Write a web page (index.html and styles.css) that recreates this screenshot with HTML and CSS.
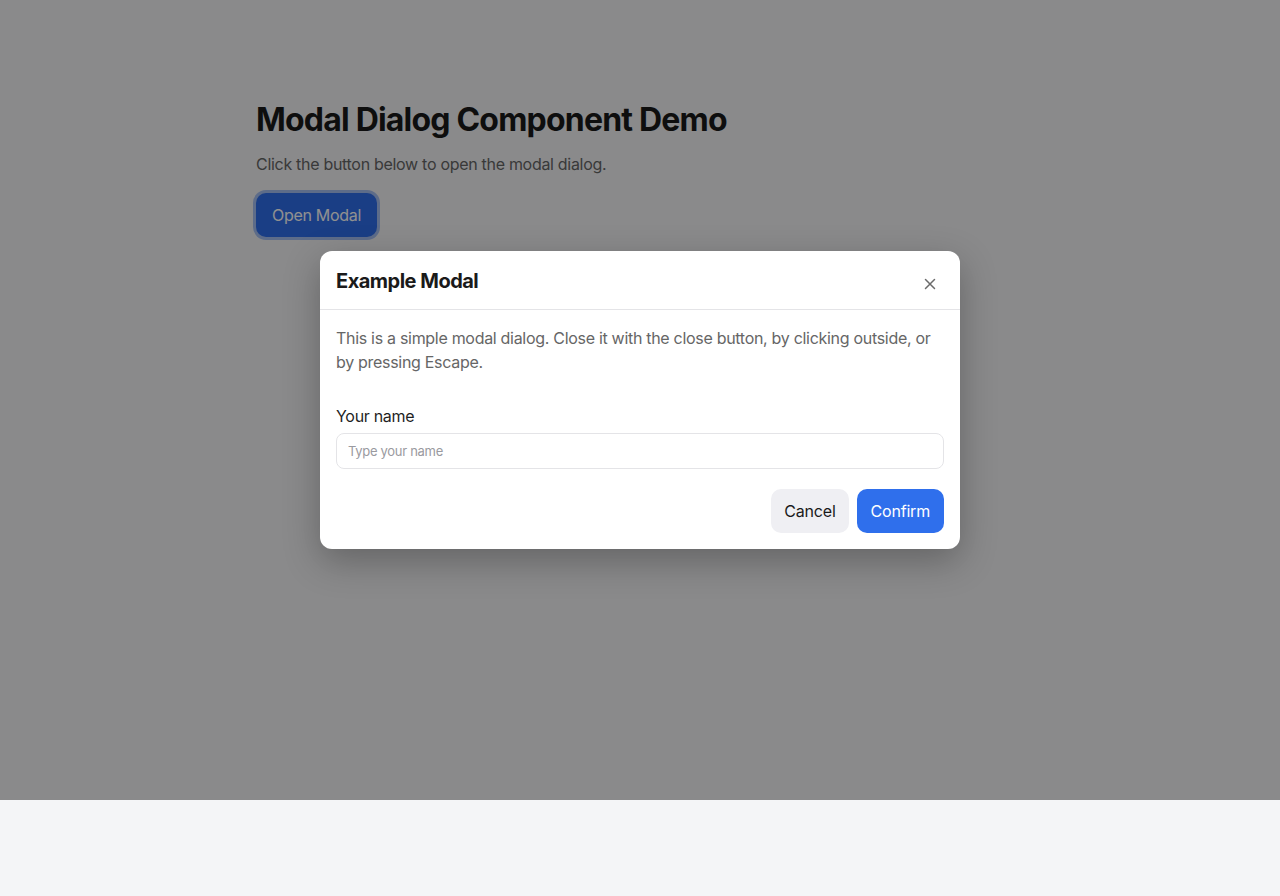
FILE: index.html
```html
<!DOCTYPE html>
<html lang="en">
<head>
<meta charset="utf-8">
<title>Modal Dialog Component Demo</title>
<link rel="stylesheet" href="styles.css">
</head>
<body>
<div class="page">
  <main class="demo">
    <h1 class="demo-title">Modal Dialog Component Demo</h1>
    <p class="demo-text">Click the button below to open the modal dialog.</p>
    <button class="btn btn-primary btn-focus" type="button">Open Modal</button>
  </main>
  <div class="overlay">
    <div class="modal" role="dialog" aria-modal="true" aria-labelledby="modal-title">
      <header class="modal-header">
        <h2 class="modal-title" id="modal-title">Example Modal</h2>
        <button class="modal-close" type="button" aria-label="Close">
          <svg width="12" height="12" viewBox="0 0 12 12" aria-hidden="true"><path d="M1.5 1.5 L10.5 10.5 M10.5 1.5 L1.5 10.5" stroke="currentColor" stroke-width="1.5" stroke-linecap="round"/></svg>
        </button>
      </header>
      <div class="modal-body">
        <p class="modal-text">This is a simple modal dialog. Close it with the close button, by clicking outside, or by pressing Escape.</p>
        <label class="field-label" for="name">Your name</label>
        <input class="field-input" id="name" type="text" placeholder="Type your name">
        <div class="modal-actions">
          <button class="btn btn-secondary" type="button">Cancel</button>
          <button class="btn btn-primary btn-confirm" type="button">Confirm</button>
        </div>
      </div>
    </div>
  </div>
</div>
</body>
</html>
```
FILE: styles.css
```css
* { box-sizing: border-box; }
html, body {
  margin: 0;
  padding: 0;
  background: #f4f5f7;
  font-family: Inter, "Noto Sans", "Liberation Sans", sans-serif;
  color: #1a1a1a;
  letter-spacing: -0.3px;
}
.page {
  position: relative;
  height: 800px;
}
.demo {
  width: 768px;
  margin: 0 auto;
  padding-top: 100px;
}
.demo-title {
  margin: 0;
  font-size: 32px;
  line-height: 40px;
  font-weight: 700;
  letter-spacing: -0.8px;
  color: #1a1a1a;
}
.demo-text {
  margin: 12px 0 16px;
  font-size: 16px;
  line-height: 24px;
  color: #666;
}
.btn {
  font-family: inherit;
  font-size: 16px;
  line-height: 20px;
  letter-spacing: -0.2px;
  padding: 12px 13px;
  border: 0;
  border-radius: 10px;
  cursor: pointer;
}
.btn-primary {
  background: #2f6fec;
  color: #fff;
}
.btn-secondary {
  background: #efeff3;
  color: #1a1a1a;
}
.btn-confirm {
  padding: 12px 14px;
}
.demo .btn {
  padding: 12px 16px;
  margin-top: 1px;
  letter-spacing: -0.3px;
}
.btn-focus {
  box-shadow: 0 0 0 3px rgba(47, 111, 236, 0.4);
}
.overlay {
  position: absolute;
  inset: 0;
  background: rgba(0, 0, 0, 0.435);
  display: flex;
  align-items: center;
  justify-content: center;
}
.modal {
  width: 640px;
  background: #fff;
  border-radius: 12px;
  box-shadow: 0 12px 36px rgba(0, 0, 0, 0.28);
  overflow: hidden;
}
.modal-header {
  display: flex;
  align-items: center;
  justify-content: space-between;
  padding: 18px 16px 15px;
  border-bottom: 1px solid #e4e4e7;
}
.modal-title {
  margin: 0;
  font-size: 20px;
  line-height: 25px;
  font-weight: 700;
  letter-spacing: -0.5px;
  color: #1a1a1a;
}
.modal-close {
  width: 28px;
  height: 25px;
  border: 0;
  background: transparent;
  color: #6b6b6b;
  display: flex;
  align-items: center;
  justify-content: center;
  padding: 5px 0 0;
  cursor: pointer;
}
.modal-body {
  padding: 16px;
}
.modal-text {
  margin: 0 0 32px;
  font-size: 16px;
  line-height: 24px;
  color: #666;
}
.field-label {
  display: block;
  font-size: 16px;
  line-height: 20px;
  margin: 2px 0 7px;
  color: #1f1f1f;
}
.field-input {
  display: block;
  width: 100%;
  height: 36px;
  padding: 0 11px;
  border: 1px solid #e4e4e7;
  border-radius: 8px;
  font-family: inherit;
  font-size: 13px;
  letter-spacing: -0.3px;
  color: #1a1a1a;
  background: #fff;
  outline: none;
}
.field-input::placeholder {
  color: #9a9aa0;
}
.modal-actions {
  display: flex;
  justify-content: flex-end;
  gap: 8px;
  margin-top: 20px;
}
```
